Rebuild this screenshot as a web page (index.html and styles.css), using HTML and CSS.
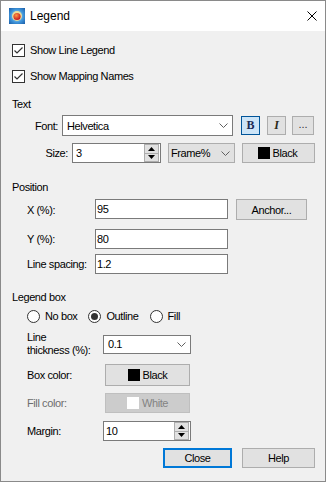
FILE: index.html
```html
<!DOCTYPE html>
<html lang="en">
<head>
    <meta charset="UTF-8">
    <meta name="viewport" content="width=device-width, initial-scale=1.0">
    <title>Legend</title>
    <link rel="stylesheet" href="styles.css">
</head>
<body>
    <div class="window">
        <div class="titlebar">
            <svg class="app-icon" width="16" height="16" viewBox="0 0 16 16">
                <defs>
                    <radialGradient id="iconBg" cx="50%" cy="50%" r="75%">
                        <stop offset="0" stop-color="#cdeeff"/>
                        <stop offset="0.55" stop-color="#3d93d9"/>
                        <stop offset="1" stop-color="#15539e"/>
                    </radialGradient>
                    <radialGradient id="iconBall" cx="40%" cy="35%" r="65%">
                        <stop offset="0" stop-color="#ff9a40"/>
                        <stop offset="1" stop-color="#c4121f"/>
                    </radialGradient>
                </defs>
                <rect width="16" height="16" fill="url(#iconBg)"/>
                <circle cx="8" cy="8" r="5" fill="#ffe48a" opacity="0.85"/>
                <circle cx="8" cy="8.5" r="3.6" fill="url(#iconBall)"/>
            </svg>
            <span class="title">Legend</span>
            <svg class="close-x" width="10" height="10" viewBox="0 0 10 10">
                <path d="M0.5 0.5 L9.5 9.5 M9.5 0.5 L0.5 9.5" stroke="#000" stroke-width="1"/>
            </svg>
        </div>

        <div class="content">
            <div class="row check-row mt-11">
                <span class="checkbox"><svg width="11" height="11" viewBox="0 0 11 11"><path d="M1.5 5.5 L4 8 L9.5 2.5" fill="none" stroke="#333" stroke-width="1.2"/></svg></span>
                Show Line Legend
            </div>
            <div class="row check-row mt-10">
                <span class="checkbox"><svg width="11" height="11" viewBox="0 0 11 11"><path d="M1.5 5.5 L4 8 L9.5 2.5" fill="none" stroke="#333" stroke-width="1.2"/></svg></span>
                Show Mapping Names
            </div>

            <!-- Text -->
            <div class="group-label mt-13">Text</div>
            <div class="row font-row mt-4">
                <span class="lbl lbl-font">Font:</span>
                <div class="combo combo-font">
                    <span>Helvetica</span>
                    <svg class="chev" width="9" height="5" viewBox="0 0 9 5"><path d="M0.5 0.5 L4.5 4.5 L8.5 0.5" fill="none" stroke="#606060"/></svg>
                </div>
                <button class="tbtn tbtn-bold">B</button>
                <button class="tbtn tbtn-italic">I</button>
                <button class="tbtn tbtn-more">...</button>
            </div>
            <div class="row size-row mt-7">
                <span class="lbl lbl-size">Size:</span>
                <div class="spin spin-size">
                    <span class="spin-value">3</span>
                    <div class="spin-btns">
                        <span class="spin-up"><svg width="7" height="4" viewBox="0 0 7 4"><path d="M0 4 L3.5 0 L7 4 Z" fill="#000"/></svg></span>
                        <span class="spin-down"><svg width="7" height="4" viewBox="0 0 7 4"><path d="M0 0 L3.5 4 L7 0 Z" fill="#000"/></svg></span>
                    </div>
                </div>
                <div class="combo combo-units">
                    <span>Frame%</span>
                    <svg class="chev" width="9" height="5" viewBox="0 0 9 5"><path d="M0.5 0.5 L4.5 4.5 L8.5 0.5" fill="none" stroke="#606060"/></svg>
                </div>
                <button class="btn btn-color btn-black"><span class="swatch"></span>Black</button>
            </div>

            <!-- Position -->
            <div class="group-label mt-17">Position</div>
            <div class="row pos-row row-x mt-5">
                <span class="lbl lbl-pos">X (%):</span>
                <div class="field field-pos">95</div>
                <button class="btn btn-anchor">Anchor...</button>
            </div>
            <div class="row pos-row mt-9">
                <span class="lbl lbl-pos">Y (%):</span>
                <div class="field field-pos">80</div>
            </div>
            <div class="row pos-row mt-5">
                <span class="lbl lbl-pos">Line spacing:</span>
                <div class="field field-pos">1.2</div>
            </div>

            <!-- Legend box -->
            <div class="group-label mt-16">Legend box</div>
            <div class="row radio-row mt-5">
                <span class="radio"></span><span class="radio-text">No box</span>
                <span class="radio checked"></span><span class="radio-text">Outline</span>
                <span class="radio"></span><span class="radio-text">Fill</span>
            </div>
            <div class="row thick-row mt-8">
                <span class="lbl lbl-thick">Line<br>thickness (%):</span>
                <div class="combo combo-thick">
                    <span>0.1</span>
                    <svg class="chev" width="9" height="5" viewBox="0 0 9 5"><path d="M0.5 0.5 L4.5 4.5 L8.5 0.5" fill="none" stroke="#606060"/></svg>
                </div>
            </div>
            <div class="row box-row mt-7">
                <span class="lbl lbl-box">Box color:</span>
                <button class="btn btn-color btn-box"><span class="swatch"></span>Black</button>
            </div>
            <div class="row fill-row mt-7">
                <span class="lbl lbl-box disabled">Fill color:</span>
                <button class="btn btn-color btn-fill" disabled><span class="swatch swatch-white"></span>White</button>
            </div>
            <div class="row margin-row mt-8">
                <span class="lbl lbl-thick">Margin:</span>
                <div class="spin spin-margin">
                    <span class="spin-value">10</span>
                    <div class="spin-btns">
                        <span class="spin-up"><svg width="7" height="4" viewBox="0 0 7 4"><path d="M0 4 L3.5 0 L7 4 Z" fill="#000"/></svg></span>
                        <span class="spin-down"><svg width="7" height="4" viewBox="0 0 7 4"><path d="M0 0 L3.5 4 L7 0 Z" fill="#000"/></svg></span>
                    </div>
                </div>
            </div>

            <div class="row actions mt-7">
                <button class="btn btn-close">Close</button>
                <button class="btn btn-help">Help</button>
            </div>
        </div>
    </div>
</body>
</html>
```

FILE: styles.css
```css
* {
    box-sizing: border-box;
}
body {
    margin: 0;
    background: #fff;
    font-family: "Liberation Sans", Arial, sans-serif;
    font-size: 11px;
    letter-spacing: -0.4px;
    color: #000;
}
.window {
    width: 326px;
    height: 482px;
    border: 1px solid #8a8a8a;
    background: #f0f0f0;
}
.titlebar {
    height: 30px;
    background: #fff;
    display: flex;
    align-items: center;
    padding-left: 8px;
}
.app-icon {
    margin-top: -1px;
}
.title {
    font-size: 12px;
    letter-spacing: 0;
    margin-left: 5px;
}
.close-x {
    margin-left: auto;
    margin-right: 8px;
    margin-top: -1px;
}
.content {
    padding: 0 10px 0 11px;
}
.row {
    display: flex;
    align-items: center;
}
.mt-4 { margin-top: 4px; }
.mt-5 { margin-top: 5px; }
.mt-7 { margin-top: 7px; }
.mt-8 { margin-top: 8px; }
.mt-9 { margin-top: 9px; }
.mt-10 { margin-top: 10px; }
.mt-11 { margin-top: 11px; }
.mt-13 { margin-top: 13px; }
.mt-16 { margin-top: 16px; }
.mt-17 { margin-top: 17px; }

/* checkboxes */
.check-row {
    height: 16px;
}
.checkbox {
    width: 13px;
    height: 13px;
    border: 1px solid #333;
    background: #fff;
    margin-right: 5px;
    display: flex;
    align-items: center;
    justify-content: center;
}
.group-label {
    height: 14px;
    line-height: 14px;
}
.lbl {
    flex: none;
}
.lbl-font {
    width: 46px;
    text-align: right;
    margin-right: 4px;
}
.lbl-size {
    width: 56px;
    text-align: right;
    margin-right: 4px;
}
.lbl-pos {
    width: 83px;
    padding-left: 15px;
}
.lbl-thick {
    width: 91px;
    padding-left: 15px;
    line-height: 13px;
}
.lbl-box {
    width: 93px;
    padding-left: 15px;
}
.disabled {
    color: #6d6d6d;
}

/* inputs */
.field,
.combo,
.spin {
    height: 20px;
    background: #fff;
    border: 1px solid #7a7a7a;
    display: flex;
    align-items: center;
}
.field-pos {
    width: 133px;
    padding-left: 1px;
}
.combo {
    padding-left: 4px;
    justify-content: space-between;
}
.combo .chev {
    margin-right: 4px;
}
.combo-font {
    width: 171px;
    height: 21px;
}
.combo-units {
    width: 67px;
    margin-left: 7px;
    background: #e1e1e1;
    border-color: #adadad;
    padding-left: 2px;
}
.combo-thick {
    width: 88px;
    height: 19px;
}
.spin {
    justify-content: space-between;
}
.spin-size {
    width: 89px;
    padding-left: 3px;
}
.spin-margin {
    width: 88px;
    padding-left: 2px;
}
.spin-btns {
    width: 15px;
    height: 18px;
    display: flex;
    flex-direction: column;
    margin-right: 1px;
}
.spin-up,
.spin-down {
    flex: 1;
    background: #e1e1e1;
    border: 1px solid #adadad;
    display: flex;
    align-items: center;
    justify-content: center;
}
.spin-down {
    border-top: none;
}

/* buttons */
button {
    font-family: inherit;
    font-size: inherit;
    letter-spacing: inherit;
    color: #000;
    padding: 0;
    margin: 0;
}
.btn,
.tbtn {
    height: 20px;
    background: #e1e1e1;
    border: 1px solid #adadad;
    display: flex;
    align-items: center;
    justify-content: center;
}
.tbtn {
    width: 19px;
    height: 19px;
    font-family: "Liberation Serif", "Times New Roman", serif;
    font-size: 12px;
    letter-spacing: 0;
}
.tbtn-bold {
    margin-left: 8px;
    background: #cce4f7;
    border-color: #005499;
    font-weight: bold;
    color: #1d2b55;
}
.tbtn-italic {
    margin-left: 7px;
    font-style: italic;
    font-weight: bold;
    color: #2a2a1a;
}
.tbtn-more {
    margin-left: 6px;
    width: 22px;
    font-family: "Liberation Sans", Arial, sans-serif;
    font-size: 11px;
    color: #333;
    align-items: flex-end;
    padding-bottom: 4px;
}
.swatch {
    width: 12px;
    height: 12px;
    background: #000;
    margin-right: 3px;
}
.swatch-white {
    background: #fff;
}
.btn-black {
    width: 73px;
    margin-left: 7px;
    padding-right: 2px;
}
.btn-anchor {
    width: 71px;
    height: 21px;
    margin-left: 8px;
}
.pos-row {
    height: 20px;
}
.row-x {
    height: 21px;
}
.pos-row .field-pos {
    align-self: flex-start;
}

/* radios */
.radio-row {
    height: 14px;
    padding-left: 15px;
}
.radio {
    width: 13px;
    height: 13px;
    border: 1px solid #333;
    border-radius: 50%;
    background: #fff;
    display: flex;
    align-items: center;
    justify-content: center;
    margin-right: 5px;
}
.radio.checked::after {
    content: "";
    width: 7px;
    height: 7px;
    border-radius: 50%;
    background: #333;
}
.radio-text {
    margin-right: 11px;
}
.thick-row {
    height: 26px;
}
.box-row {
    height: 22px;
}
.btn-box {
    width: 85px;
    height: 22px;
}
.fill-row {
    height: 20px;
}
.btn-fill {
    width: 85px;
    background: #cccccc;
    border-color: #bfbfbf;
    color: #838383;
}
.margin-row {
    height: 20px;
}
.actions {
    justify-content: flex-end;
    height: 20px;
}
.btn-close {
    width: 69px;
    margin-right: 10px;
    border: 2px solid #0078d7;
}
.btn-help {
    width: 73px;
}
```
